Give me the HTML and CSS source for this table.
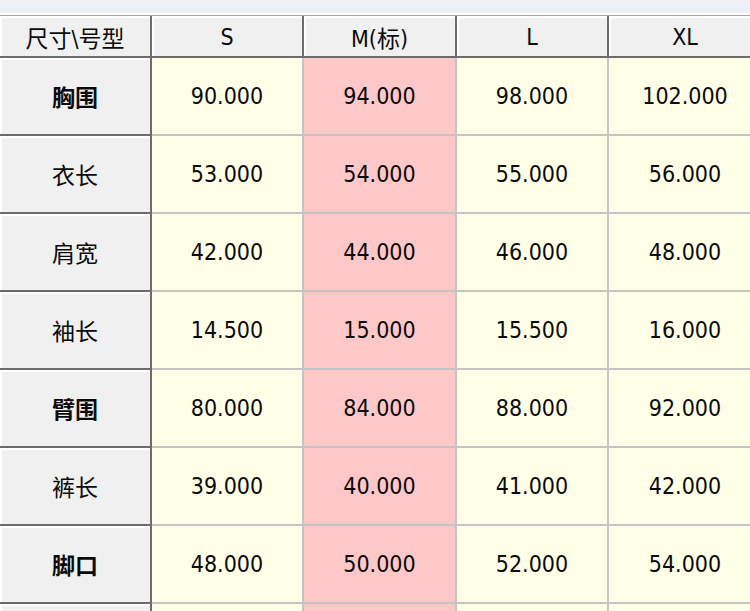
FILE: index.html
```html
<!DOCTYPE html>
<html lang="zh">
<head>
<meta charset="utf-8">
<title>尺寸表</title>
<link rel="stylesheet" href="styles.css">
</head>
<body>
<div class="topbar"></div>
<div class="sheet">
  <div class="hd">尺寸\号型</div>
  <div class="hd">S</div>
  <div class="hd">M(标)</div>
  <div class="hd">L</div>
  <div class="hd last">XL</div>

  <div class="rh b">胸围</div>
  <div class="c">90.000</div>
  <div class="c m">94.000</div>
  <div class="c">98.000</div>
  <div class="c last">102.000</div>

  <div class="rh">衣长</div>
  <div class="c">53.000</div>
  <div class="c m">54.000</div>
  <div class="c">55.000</div>
  <div class="c last">56.000</div>

  <div class="rh">肩宽</div>
  <div class="c">42.000</div>
  <div class="c m">44.000</div>
  <div class="c">46.000</div>
  <div class="c last">48.000</div>

  <div class="rh">袖长</div>
  <div class="c">14.500</div>
  <div class="c m">15.000</div>
  <div class="c">15.500</div>
  <div class="c last">16.000</div>

  <div class="rh b">臂围</div>
  <div class="c">80.000</div>
  <div class="c m">84.000</div>
  <div class="c">88.000</div>
  <div class="c last">92.000</div>

  <div class="rh">裤长</div>
  <div class="c">39.000</div>
  <div class="c m">40.000</div>
  <div class="c">41.000</div>
  <div class="c last">42.000</div>

  <div class="rh b">脚口</div>
  <div class="c">48.000</div>
  <div class="c m">50.000</div>
  <div class="c">52.000</div>
  <div class="c last">54.000</div>

  <div class="rh stub"></div>
  <div class="c stub"></div>
  <div class="c m stub"></div>
  <div class="c stub"></div>
  <div class="c last stub"></div>
</div>
</body>
</html>
```

FILE: styles.css
```css
html, body {
  margin: 0;
  padding: 0;
  overflow: hidden;
  background: #ffffff;
}

body {
  width: 750px;
  height: 611px;
  font-family: "DejaVu Sans Condensed", "Noto Sans", "Noto Sans CJK SC", sans-serif;
  color: #0a0a0a;
}

.topbar {
  height: 16px;
  box-sizing: border-box;
  background: linear-gradient(#edf1f6 0, #edf1f6 13px, #ffffff 13px);
  border-bottom: 1px solid #a4a4a4;
}

.sheet {
  width: 750px;
  display: grid;
  grid-template-columns: 152px 152px 153px 152px 152px;
  grid-template-rows: 42px repeat(7, 78px) 7px;
  overflow: hidden;
}

.sheet > div {
  box-sizing: border-box;
  display: flex;
  align-items: center;
  justify-content: center;
  font-size: 23px;
}

.hd, .rh {
  background: #f0f0f0;
  border-right: 2px solid #6c6c6c;
  border-bottom: 2px solid #6c6c6c;
  box-shadow: inset 2px 2px 0 #ffffff;
}

.hd {
  font-size: 22px;
  padding-top: 1px;
}

.rh {
  font-family: "Noto Sans CJK SC", sans-serif;
  font-size: 22px;
  font-weight: 400;
}

.rh.b {
  font-weight: 700;
}

.c {
  background: #ffffe8;
  border-right: 2px solid #c4c4c4;
  border-bottom: 2px solid #c4c4c4;
}

.c.m {
  background: #ffc8c8;
}

.last {
  border-right: none;
}

.sheet > .stub {
  border-bottom: none;
}
```
